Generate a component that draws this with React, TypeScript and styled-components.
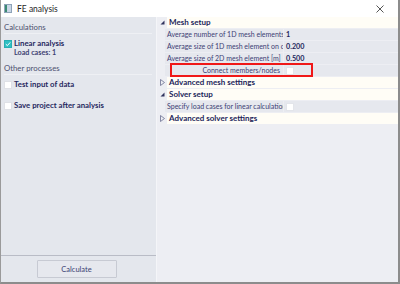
import { createGlobalStyle, styled } from "styled-components";

const GlobalStyle = createGlobalStyle`
  html, body {
    margin: 0;
    padding: 0;
    background: #ffffff;
  }
  body {
    font-family: Lato, "Noto Sans", sans-serif;
  }
`;

const Window = styled.div`
  width: 400px;
  height: 284px;
  box-sizing: border-box;
  border-left: 1px solid #9a9a9a;
  border-right: 2px solid #8c8c8c;
  border-bottom: 2px solid #8c8c8c;
  display: flex;
  flex-direction: column;
  overflow: hidden;
  background: #eceef3;
`;

const TitleBar = styled.div`
  height: 17px;
  flex: none;
  background: #ffffff;
  display: flex;
  align-items: center;
  padding: 0 0 0 3px;
  font-size: 8.5px;
  color: #1e1e1e;
`;

const TitleIcon = styled.div`
  width: 8px;
  height: 9px;
  margin-right: 5px;
  background: linear-gradient(90deg, #3b8a72 0 40%, #c9d6e6 40% 100%);
  border: 1px solid #8ea3b8;
  box-sizing: border-box;
`;

const TitleText = styled.span`
  flex: 1;
`;

const CloseButton = styled.div`
  width: 24px;
  display: flex;
  justify-content: center;
  align-items: center;
  margin-right: 6px;
`;

const Body = styled.div`
  flex: 1;
  display: flex;
  min-height: 0;
`;

const LeftPanel = styled.div`
  width: 155px;
  flex: none;
  background: #e4e7ed;
  border-right: 1px solid #f4f5f8;
  display: flex;
  flex-direction: column;
`;

const LeftContent = styled.div`
  flex: 1;
  padding: 5px 0 0 3px;
`;

const SectionTitle = styled.div`
  font-size: 7.8px;
  line-height: 10px;
  color: #4d5170;
  padding-bottom: 1px;
  margin-right: 4px;
  border-bottom: 1px solid #eef0f4;
  margin-bottom: 5px;
`;

const CheckRow = styled.div<{ $tight?: boolean }>`
  display: flex;
  align-items: flex-start;
  gap: 2px;
  margin-bottom: ${(p) => (p.$tight ? 5 : 12)}px;
`;

const Box = styled.div<{ $checked?: boolean }>`
  width: 8px;
  height: 8px;
  margin-top: 1px;
  flex: none;
  box-sizing: border-box;
  background: ${(p) => (p.$checked ? "#2fc0c4" : "#ffffff")};
  border: 1px solid ${(p) => (p.$checked ? "#27aeb2" : "#dfe1e6")};
  display: flex;
  align-items: center;
  justify-content: center;
`;

const CheckLabel = styled.div`
  font-size: 7.8px;
  font-weight: bold;
  color: #26285e;
  line-height: 9px;
  small {
    display: block;
    font-weight: bold;
    font-size: 7.2px;
    color: #3e4272;
    line-height: 10px;
  }
`;

const LeftFooter = styled.div`
  height: 26px;
  border-top: 1px solid #b9bcc6;
  display: flex;
  align-items: center;
  justify-content: center;
  padding-right: 4px;
`;

const CalcButton = styled.div`
  width: 80px;
  height: 18px;
  box-sizing: border-box;
  border: 1px solid #c7cad3;
  border-radius: 1px;
  background: #e6e8ee;
  font-size: 7.5px;
  color: #3b3f73;
  display: flex;
  align-items: center;
  justify-content: center;
`;

const RightPanel = styled.div`
  flex: 1;
  display: flex;
  flex-direction: column;
  background: #edeef3;
`;

const GroupRow = styled.div`
  height: 11px;
  display: flex;
  align-items: center;
  margin-bottom: 1px;
`;

const Arrow = styled.div`
  width: 10px;
  flex: none;
  display: flex;
  justify-content: center;
  align-items: center;
`;

const GroupTitle = styled.div`
  flex: 1;
  height: 100%;
  background: #fffdf6;
  font-size: 8px;
  font-weight: bold;
  color: #1d1f5a;
  line-height: 11px;
  padding-left: 2px;
`;

const PropRow = styled.div`
  height: 11px;
  display: flex;
  align-items: center;
  margin-left: 8px;
  margin-bottom: 1px;
  position: relative;
`;

const PropLabel = styled.div`
  width: 118px;
  flex: none;
  font-size: 7px;
  color: #3c4074;
  text-align: right;
  white-space: nowrap;
  overflow: hidden;
  line-height: 11px;
  background: #e6e8ee;
  padding: 0 3px 0 2px;
  box-sizing: border-box;
`;

const PropValue = styled.div`
  flex: 1;
  height: 100%;
  font-size: 7.2px;
  font-weight: bold;
  color: #24275c;
  padding-left: 2px;
  line-height: 11px;
  background: #e6e8ee;
  margin-left: 1px;
  display: flex;
  align-items: center;
`;

const SmallBox = styled.div`
  width: 8px;
  height: 8px;
  background: #ffffff;
  border: 1px solid #e3e5ea;
  box-sizing: border-box;
`;

const Highlight = styled.div`
  position: absolute;
  left: 5px;
  top: -2px;
  width: 143px;
  height: 14px;
  border: 2px solid #f01818;
  box-sizing: border-box;
`;

function Tri({ open }: { open: boolean }) {
  return open ? (
    <svg width="5" height="5" viewBox="0 0 5 5">
      <path d="M4.5 0.5 L4.5 4.5 L0.5 4.5 Z" fill="#30335e" />
    </svg>
  ) : (
    <svg width="5" height="7" viewBox="0 0 5 7">
      <path d="M0.5 0.5 L4.5 3.5 L0.5 6.5 Z" fill="none" stroke="#6a6e90" strokeWidth="0.8" />
    </svg>
  );
}

function Group({ title, open }: { title: string; open: boolean }) {
  return (
    <GroupRow>
      <Arrow>
        <Tri open={open} />
      </Arrow>
      <GroupTitle>{title}</GroupTitle>
    </GroupRow>
  );
}

function Prop({
  label,
  value,
  box,
  highlight,
}: {
  label: string;
  value?: string;
  box?: boolean;
  highlight?: boolean;
}) {
  return (
    <PropRow>
      <PropLabel>{label}</PropLabel>
      <PropValue>{box ? <SmallBox /> : value}</PropValue>
      {highlight && <Highlight />}
    </PropRow>
  );
}

export default function App() {
  return (
    <>
      <GlobalStyle />
      <Window>
        <TitleBar>
          <TitleIcon />
          <TitleText>FE analysis</TitleText>
          <CloseButton>
            <svg width="8" height="8" viewBox="0 0 8 8">
              <path d="M0.5 0.5 L7.5 7.5 M7.5 0.5 L0.5 7.5" stroke="#555" strokeWidth="1" />
            </svg>
          </CloseButton>
        </TitleBar>
        <Body>
          <LeftPanel>
            <LeftContent>
              <SectionTitle>Calculations</SectionTitle>
              <CheckRow $tight>
                <Box $checked>
                  <svg width="6" height="6" viewBox="0 0 6 6">
                    <path d="M0.8 3.2 L2.4 4.6 L5.2 1.4" fill="none" stroke="#fff" strokeWidth="1" />
                  </svg>
                </Box>
                <CheckLabel>
                  Linear analysis
                  <small>Load cases: 1</small>
                </CheckLabel>
              </CheckRow>
              <SectionTitle>Other processes</SectionTitle>
              <CheckRow>
                <Box />
                <CheckLabel>Test input of data</CheckLabel>
              </CheckRow>
              <CheckRow>
                <Box />
                <CheckLabel>Save project after analysis</CheckLabel>
              </CheckRow>
            </LeftContent>
            <LeftFooter>
              <CalcButton>Calculate</CalcButton>
            </LeftFooter>
          </LeftPanel>
          <RightPanel>
            <Group title="Mesh setup" open />
            <Prop label="Average number of 1D mesh elements on a member" value="1" />
            <Prop label="Average size of 1D mesh element on curved members" value="0.200" />
            <Prop label="Average size of 2D mesh element [m]" value="0.500" />
            <Prop label="Connect members/nodes" box highlight />
            <Group title="Advanced mesh settings" open={false} />
            <Group title="Solver setup" open />
            <Prop label="Specify load cases for linear calculation" box />
            <Group title="Advanced solver settings" open={false} />
          </RightPanel>
        </Body>
      </Window>
    </>
  );
}
